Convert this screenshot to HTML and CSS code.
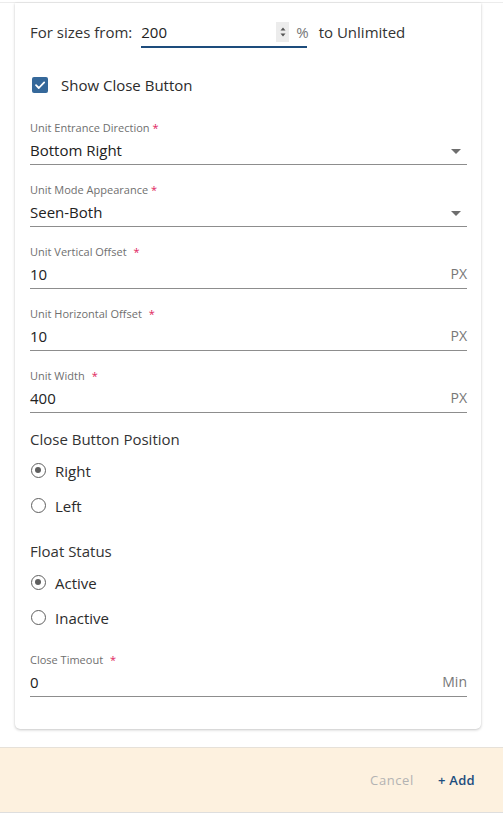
FILE: index.html
```html
<!DOCTYPE html>
<html>
<head>
<meta charset="utf-8">
<link rel="stylesheet" href="styles.css">
</head>
<body>
<div class="top-rule"></div>
<div class="page">
  <div class="card">
    <div class="size-row">
      <span class="size-label">For sizes from:</span>
      <div class="num-input">
        <span class="num-value">200</span>
        <span class="spinner">
          <svg width="6" height="12" viewBox="0 0 6 12"><path d="M0.5 4.5 L3 1.5 L5.5 4.5 Z M0.5 7.5 L3 10.5 L5.5 7.5 Z" fill="#555"/></svg>
        </span>
      </div>
      <span class="pct">%</span>
      <span class="size-label">to Unlimited</span>
    </div>

    <label class="check-row">
      <span class="checkbox">
        <svg width="16" height="16" viewBox="0 0 16 16"><path d="M4 8.2 L6.8 11 L12.2 5.4" fill="none" stroke="#fff" stroke-width="1.8" stroke-linecap="round" stroke-linejoin="round"/></svg>
      </span>
      <span>Show Close Button</span>
    </label>

    <div class="field">
      <div class="f-label">Unit Entrance Direction<span class="req req-tight">*</span></div>
      <div class="f-value"><span>Bottom Right</span><span class="caret"></span></div>
    </div>

    <div class="field">
      <div class="f-label">Unit Mode Appearance<span class="req req-tight">*</span></div>
      <div class="f-value"><span>Seen-Both</span><span class="caret"></span></div>
    </div>

    <div class="field">
      <div class="f-label">Unit Vertical Offset<span class="req">*</span></div>
      <div class="f-value"><span>10</span><span class="suffix">PX</span></div>
    </div>

    <div class="field">
      <div class="f-label">Unit Horizontal Offset<span class="req">*</span></div>
      <div class="f-value"><span>10</span><span class="suffix">PX</span></div>
    </div>

    <div class="field">
      <div class="f-label">Unit Width<span class="req">*</span></div>
      <div class="f-value"><span>400</span><span class="suffix">PX</span></div>
    </div>

    <div class="group">
      <div class="group-title">Close Button Position</div>
      <div class="radio-row"><span class="radio checked"></span><span>Right</span></div>
      <div class="radio-row"><span class="radio"></span><span>Left</span></div>
    </div>

    <div class="group">
      <div class="group-title">Float Status</div>
      <div class="radio-row"><span class="radio checked"></span><span>Active</span></div>
      <div class="radio-row"><span class="radio"></span><span>Inactive</span></div>
    </div>

    <div class="field field-last">
      <div class="f-label">Close Timeout<span class="req">*</span></div>
      <div class="f-value"><span>0</span><span class="suffix">Min</span></div>
    </div>
  </div>
</div>
<div class="footer">
  <span class="btn-cancel">Cancel</span>
  <span class="btn-add">+ Add</span>
</div>
</body>
</html>
```

FILE: styles.css
```css
html, body {
  margin: 0;
  padding: 0;
  background: #fff;
}
body {
  font-family: "Open Sans", "Noto Sans", sans-serif;
  color: #2b2b2b;
  width: 503px;
  height: 814px;
  overflow: hidden;
}
.top-rule {
  height: 2px;
  border-bottom: 1px solid #ececec;
}
.page {
  padding: 0 22px 0 15px;
}
.card {
  background: #fff;
  padding: 13px 14px 32px 15px;
  border-radius: 0 0 5px 5px;
  box-shadow: 0 1px 3px rgba(0, 0, 0, 0.22), 0 0 1px rgba(0, 0, 0, 0.08);
}
.size-row {
  display: flex;
  align-items: center;
  height: 32px;
  font-size: 15px;
  color: #333;
}
.size-label {
  white-space: nowrap;
}
.num-input {
  display: flex;
  align-items: center;
  justify-content: space-between;
  width: 166px;
  height: 32px;
  box-sizing: border-box;
  margin-left: 9px;
  border-bottom: 2px solid #1d4c7c;
  padding-top: 2px;
}
.num-value {
  color: #222;
}
.spinner {
  display: flex;
  align-items: center;
  justify-content: center;
  width: 13px;
  height: 20px;
  background: #ececec;
  margin-right: 18px;
}
.pct {
  color: #777;
  margin: 0 10px 0 -11px;
}
.check-row {
  display: flex;
  align-items: center;
  height: 30px;
  margin-top: 22px;
  font-size: 15px;
  color: #2b2b2b;
}
.checkbox {
  display: flex;
  align-items: center;
  justify-content: center;
  width: 16px;
  height: 16px;
  border-radius: 2px;
  background: #35689a;
  margin: 0 13px 0 2px;
}
.field {
  margin-top: 18px;
}
.check-row + .field {
  margin-top: 21px;
}
.f-label {
  font-size: 11px;
  line-height: 14px;
  color: #6f6f6f;
}
.req {
  color: #e0245e;
  margin-left: 7px;
}
.req-tight {
  margin-left: 3px;
}
.f-value {
  display: flex;
  align-items: center;
  justify-content: space-between;
  height: 29px;
  border-bottom: 1px solid #8d8d8d;
  font-size: 15px;
  color: #222;
}
.suffix {
  color: #777;
  font-size: 14px;
}
.caret {
  width: 0;
  height: 0;
  border-left: 5px solid transparent;
  border-right: 5px solid transparent;
  border-top: 5px solid #6e6e6e;
  margin-right: 6px;
  margin-top: 3px;
}
.group {
  margin-top: 16px;
}
.group + .group {
  margin-top: 18px;
}
.group-title {
  font-size: 15px;
  line-height: 20px;
  color: #333;
  margin-bottom: 4px;
}
.radio-row {
  display: flex;
  align-items: center;
  height: 35px;
  font-size: 15px;
  color: #2b2b2b;
}
.radio {
  width: 15px;
  height: 15px;
  box-sizing: border-box;
  border: 1.6px solid #5f5f5f;
  border-radius: 50%;
  margin: 0 9px 0 1px;
  position: relative;
}
.radio.checked::after {
  content: "";
  position: absolute;
  left: 2.9px;
  top: 2.9px;
  width: 6px;
  height: 6px;
  border-radius: 50%;
  background: #5f5f5f;
}
.field-last {
  margin-top: 18px;
}
.footer {
  margin-top: 18px;
  height: 64px;
  background: #fdf1df;
  border-top: 1px solid #e6e1d9;
  border-bottom: 1px solid #dedede;
  display: flex;
  align-items: center;
  justify-content: flex-end;
  padding-right: 28px;
  font-size: 13px;
}
.btn-cancel {
  color: #b3b3b3;
  margin-right: 24px;
  letter-spacing: 0.6px;
}
.btn-add {
  color: #1c4d7e;
  font-weight: 600;
  letter-spacing: 0.3px;
}
```
